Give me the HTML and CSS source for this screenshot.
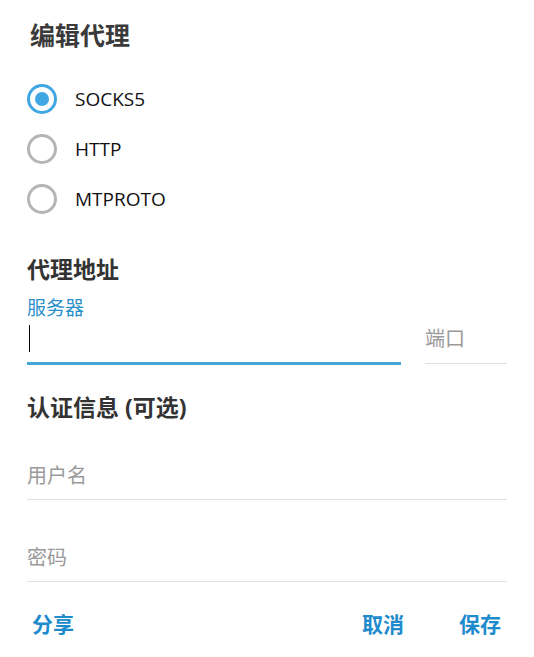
FILE: index.html
```html
<!DOCTYPE html>
<html lang="zh-CN">
<head>
<meta charset="utf-8">
<title>编辑代理</title>
<link rel="stylesheet" href="styles.css">
</head>
<body>
<div class="dialog">
  <h1 class="title">编辑代理</h1>

  <div class="radios">
    <div class="radio-row">
      <span class="radio checked"></span>
      <span class="radio-label">SOCKS5</span>
    </div>
    <div class="radio-row">
      <span class="radio"></span>
      <span class="radio-label">HTTP</span>
    </div>
    <div class="radio-row">
      <span class="radio"></span>
      <span class="radio-label">MTPROTO</span>
    </div>
  </div>

  <h2 class="section address">代理地址</h2>
  <div class="field-label">服务器</div>
  <div class="field-row">
    <div class="field server"><span class="cursor"></span></div>
    <div class="field port"><span class="placeholder">端口</span></div>
  </div>

  <h2 class="section auth">认证信息 (可选)</h2>
  <div class="field plain user"><span class="placeholder">用户名</span></div>
  <div class="field plain pass"><span class="placeholder">密码</span></div>

  <div class="actions">
    <span class="btn">分享</span>
    <span class="spacer"></span>
    <span class="btn">取消</span>
    <span class="btn">保存</span>
  </div>
</div>
</body>
</html>
```

FILE: styles.css
```css
html, body {
  margin: 0;
  padding: 0;
  background: #ffffff;
}

body {
  font-family: "Open Sans", "Noto Sans CJK SC", sans-serif;
  color: #000;
}

.dialog {
  padding: 20px 27px 0 27px;
}

.title {
  margin: 0 0 0 3px;
  font-size: 25px;
  line-height: 30px;
  font-weight: 700;
  color: #3a3a3a;
}

.radios {
  margin-top: 24px;
  display: flex;
  flex-direction: column;
}

.radio-row {
  height: 50px;
  display: flex;
  align-items: center;
  gap: 18px;
}

.radio {
  box-sizing: border-box;
  width: 30px;
  height: 30px;
  border-radius: 50%;
  border: 3px solid #b5b5b5;
  display: flex;
  align-items: center;
  justify-content: center;
}

.radio.checked {
  border-color: #40a7e3;
}

.radio.checked::after {
  content: "";
  width: 14px;
  height: 14px;
  border-radius: 50%;
  background: #40a7e3;
}

.radio-label {
  font-size: 19px;
  line-height: 26px;
  color: #111;
}

.section {
  margin: 0;
  font-weight: 700;
  color: #333;
}

.section.address {
  margin-top: 31px;
  font-size: 23px;
  line-height: 28px;
}

.field-label {
  margin-top: 14px;
  font-size: 19px;
  line-height: 22px;
  color: #2a8fcb;
}

.field-row {
  margin-top: 6px;
  display: flex;
  align-items: flex-start;
  gap: 24px;
}

.field {
  box-sizing: border-box;
}

.server {
  flex: 1;
  height: 40px;
  padding-bottom: 10px;
  border-bottom: 3px solid #45a5d6;
}

.cursor {
  display: block;
  margin-left: 2px;
  width: 1px;
  height: 27px;
  background: #000;
}

.port {
  width: 82px;
  padding-bottom: 11px;
  border-bottom: 1px solid #e0e0e0;
}

.placeholder {
  display: block;
  font-size: 20px;
  line-height: 27px;
  color: #9a9a9a;
}

.section.auth {
  margin-top: 28px;
  font-size: 23px;
  line-height: 28px;
}

.plain {
  padding-bottom: 9px;
  border-bottom: 1px solid #e0e0e0;
}

.plain .placeholder {
  line-height: 28px;
}

.user {
  margin-top: 41px;
}

.pass {
  margin-top: 44px;
}

.actions {
  margin-top: 28px;
  padding: 0 6px 0 5px;
  display: flex;
  align-items: center;
  gap: 55px;
}

.spacer {
  flex: 1;
  margin-right: -55px;
}

.btn {
  font-size: 21px;
  line-height: 28px;
  font-weight: 700;
  color: #1e8bcd;
}
```
